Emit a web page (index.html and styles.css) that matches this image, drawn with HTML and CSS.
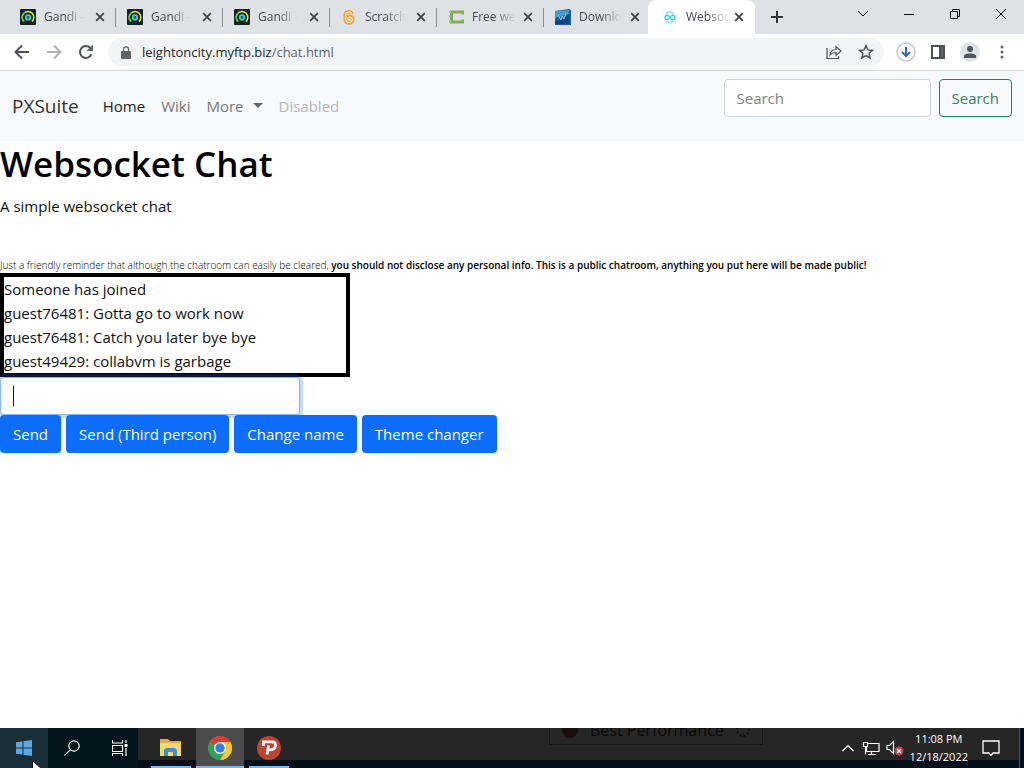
FILE: index.html
```html
<!DOCTYPE html>
<html lang="en">
<head>
  <meta charset="UTF-8" />
  <meta name="viewport" content="width=device-width, initial-scale=1.0"/>
  <title>Websocket Chat</title>
  <link rel="stylesheet" href="styles.css">
</head>
<body>
  <svg class="defs" aria-hidden="true">
    <symbol id="gandi" viewBox="0 0 16 16">
      <rect width="16" height="16" rx="1" fill="#142126"/>
      <path d="M4 12.600A5.800 5.800 0 1 1 12 12.600" fill="none" stroke="#f2e51c" stroke-width="1.500"/>
      <path d="M4 12.600A5.800 5.800 0 0 1 5 3.400" fill="none" stroke="#49c64e" stroke-width="1.500"/>
      <circle cx="8" cy="8.400" r="2.200" fill="#10575c" stroke="#35d5c8" stroke-width="1.800"/>
    </symbol>
    <symbol id="close" viewBox="0 0 10 10">
      <path d="M1.2 1.2 8.8 8.8M8.8 1.2 1.2 8.8" fill="none" stroke="#3c4043" stroke-width="1.7"/>
    </symbol>
  </svg>

  <header class="browser">
    <div class="tab-strip">
      <div class="tab"><svg class="favicon"><use href="#gandi"/></svg><span>Gandi -</span><button type="button" aria-label="Close tab"><svg><use href="#close"/></svg></button></div>
      <div class="tab"><svg class="favicon"><use href="#gandi"/></svg><span>Gandi -</span><button type="button" aria-label="Close tab"><svg><use href="#close"/></svg></button></div>
      <div class="tab"><svg class="favicon"><use href="#gandi"/></svg><span>Gandi -</span><button type="button" aria-label="Close tab"><svg><use href="#close"/></svg></button></div>
      <div class="tab">
        <svg class="favicon" viewBox="0 0 16 16">
          <path d="M10.500 5V3.300C8 2 4.500 3 4.300 6v4.500c.5 4.500 7.500 4.500 7.500.2 0-3.500-4-4.200-5-2" fill="none" stroke="#f0a03c" stroke-width="3.600" stroke-linejoin="round"/>
          <path d="M10.500 4.500V3.500C8 2.300 4.800 3.200 4.600 6v4.500c.5 4 6.800 4 6.800.2 0-2.800-3.200-3.500-4.200-1.500" fill="none" stroke="#fdebc6" stroke-width="1.300"/>
        </svg>
        <span>Scratch</span><button type="button" aria-label="Close tab"><svg><use href="#close"/></svg></button>
      </div>
      <div class="tab">
        <svg class="favicon" viewBox="0 0 16 16">
          <path d="M15 5.500V3H3.500v10H15v-2.500" fill="none" stroke="#83ad54" stroke-width="3"/>
          <path d="M1 2h2v2H1zM1 6h1v2H1zM1 11h2v3H1z" fill="#a8c58a"/>
        </svg>
        <span>Free we</span><button type="button" aria-label="Close tab"><svg><use href="#close"/></svg></button>
      </div>
      <div class="tab last">
        <svg class="favicon" viewBox="0 0 16 16">
          <path d="M0 2 14 0l2 1v15H0z" fill="#195c9e"/>
          <path d="M0 2 14 1v4L0 9z" fill="#4899cc"/>
          <path d="M0 12q8-1 14-7v10H0z" fill="#0d467f"/>
          <path d="M3 6l3 5 1-4 2 3 2-6" fill="none" stroke="#8fcdec" stroke-width="1"/>
        </svg>
        <span>Downlo</span><button type="button" aria-label="Close tab"><svg><use href="#close"/></svg></button>
      </div>
      <div class="tab active">
        <svg class="favicon" viewBox="0 0 16 16">
          <path d="M4 5Q8 1 12 5M4 12q4 3 8 0" fill="none" stroke="#a5dfe9" stroke-width="2"/>
          <path d="M8 8.500C6 5 3 6 3 8.500S6 12 8 8.500s5-2.500 5 0-3 3.500-5 0" fill="#e0fbff" stroke="#4bc4dc" stroke-width="1.500"/>
        </svg>
        <span>Websoc</span><button type="button" aria-label="Close tab"><svg><use href="#close"/></svg></button>
      </div>
      <button class="new-tab" type="button" aria-label="New tab"><svg viewBox="0 0 12 12"><path d="M6 0v12M0 6h12" stroke="#303236" stroke-width="2"/></svg></button>
      <div class="window-controls">
        <button type="button" aria-label="Search tabs"><svg viewBox="0 0 12 12"><path d="m1 3 5 5 5-5"/></svg></button>
        <button type="button" aria-label="Minimize"><svg viewBox="0 0 12 12"><path d="M1 6.500h10"/></svg></button>
        <button type="button" aria-label="Restore"><svg viewBox="0 0 12 12"><path d="M1.500 3.500h7v7h-7zM3.500 3.500v-2h7v7h-2"/></svg></button>
        <button type="button" aria-label="Close"><svg viewBox="0 0 12 12"><path d="m1 1 10 10M11 1 1 11"/></svg></button>
      </div>
    </div>

    <div class="toolbar">
      <button type="button" aria-label="Back"><svg viewBox="0 0 16 16"><path d="M15 8H2M8 1.500 1.500 8 8 14.500"/></svg></button>
      <button type="button" aria-label="Forward" disabled><svg viewBox="0 0 16 16"><path d="M1 8h13M8 1.500 14.500 8 8 14.500"/></svg></button>
      <button type="button" aria-label="Reload"><svg viewBox="0 0 16 16"><path d="M13.500 10.200A6 6 0 1 1 12.500 4L14 5.500"/><path d="M15 .500V7H8.500z" fill="#5f6368" stroke="none"/></svg></button>
      <div class="address-bar">
        <svg class="lock" viewBox="0 0 10 13"><path d="M1 5h8q1 0 1 1v6q0 1-1 1H1q-1 0-1-1V6q0-1 1-1z" fill="#5f6368"/><path d="M2.500 5V3.300a2.500 2.500 0 0 1 5 0V5" fill="none" stroke="#5f6368" stroke-width="1.300"/></svg>
        <span class="url">leightoncity.myftp.biz<span>/chat.html</span></span>
        <button type="button" aria-label="Share"><svg viewBox="0 0 16 16"><path d="M1 4v10.500h11.500V12M4 11c.500-4 3-5.500 6-5.500v-3L15 7l-5 4.500v-3Q6 8.500 4 11z" stroke-width="1.200"/></svg></button>
        <button type="button" aria-label="Bookmark"><svg viewBox="0 0 16 16"><path d="m8 1.800 1.900 4.100 4.600.500-3.400 3.100 1 4.500L8 11.700 3.900 14l1-4.500-3.400-3.100 4.600-.500z" stroke-width="1.500"/></svg></button>
      </div>
      <div class="toolbar-actions">
        <button type="button" aria-label="Downloads"><svg class="large" viewBox="0 0 20 20"><circle cx="10" cy="10" r="9" fill="#fff" stroke="#c7cbd1" stroke-width="1.500"/><path d="M10 5v9M6 10l4 4 4-4" stroke="#3266c4" stroke-width="2"/></svg></button>
        <button type="button" aria-label="Side panel"><svg viewBox="0 0 16 16"><path d="M2 2h12v12H2z"/><path d="M10 2h4v12h-4z" fill="#5f6368"/></svg></button>
        <button type="button" aria-label="Profile"><svg class="large" viewBox="0 0 20 20"><g stroke="none"><circle cx="10" cy="10" r="10" fill="#dfe2e7"/><circle cx="10" cy="7" r="3" fill="#50555c"/><path d="M4 16v-2C4 10.500 16 10.500 16 14v2z" fill="#50555c"/></g></svg></button>
        <button type="button" aria-label="Menu"><svg viewBox="0 0 16 16"><g fill="#5f6368" stroke="none"><circle cx="8" cy="3" r="1.500"/><circle cx="8" cy="8" r="1.500"/><circle cx="8" cy="13" r="1.500"/></g></svg></button>
      </div>
    </div>
  </header>

  <main class="page">
    <nav class="navbar">
      <a class="brand" href="#">PXSuite</a>
      <div class="nav-links">
        <a class="current" href="#">Home</a>
        <a href="#">Wiki</a>
        <a class="dropdown" href="#">More</a>
        <a class="disabled" href="#" aria-disabled="true">Disabled</a>
      </div>
      <form class="search">
        <input class="form-control" type="search" placeholder="Search" aria-label="Search">
        <button class="btn btn-outline" type="button">Search</button>
      </form>
    </nav>
    <h1>Websocket Chat</h1>
    <p class="lead">A simple websocket chat</p>
    <p class="reminder">Just a friendly reminder that although the chatroom can easily be cleared, <b>you should not disclose any personal info. This is a public chatroom, anything you put here will be made public!</b></p>
    <div class="chat">
      <div>Someone has joined</div>
      <div>guest76481: Gotta go to work now</div>
      <div>guest76481: Catch you later bye bye</div>
      <div>guest49429: collabvm is garbage</div>
    </div>
    <div class="message">
      <input class="form-control" id="message" type="text" aria-label="Message">
      <span class="caret"></span>
    </div>
    <div class="actions">
      <button class="btn btn-primary" type="button">Send</button>
      <button class="btn btn-primary" type="button">Send (Third person)</button>
      <button class="btn btn-primary" type="button">Change name</button>
      <button class="btn btn-primary" type="button">Theme changer</button>
    </div>
  </main>

  <footer class="taskbar">
    <div class="system">
      <button class="start" type="button" aria-label="Start"><svg viewBox="0 0 16 16"><path d="M0 2.300 6.500 1.400v6.100H0zM7.500 1.200 16 0v7.500H7.500zM0 8.500h6.500v6.100L0 13.700zM7.500 8.500H16V16l-8.500-1.200z" fill="#5aa9e4"/></svg></button>
      <button type="button" aria-label="Search"><svg viewBox="0 0 16 16"><circle cx="10" cy="6" r="5.200"/><path d="M6.200 9.800.500 15.500"/></svg></button>
      <button type="button" aria-label="Task view"><svg viewBox="0 0 16 16"><path d="M.500 0v3h10V0M.500 5.500h10v6H.500zM.500 16v-2.500h10V16M14 0v3M14 8v8"/><path d="M12.500 4h3v3h-3z" fill="#fff" stroke="none"/></svg></button>
    </div>
    <div class="apps">
      <button type="button" aria-label="File Explorer"><svg viewBox="0 0 24 24"><path d="M1 3h8l2 2h11v15H1z" fill="#e5a93b"/><path d="M1 7h21v13H1z" fill="#fbd86f"/><path d="M5 20v-5q0-3 3-3h7q3 0 3 3v5h-4v-4H9v4z" fill="#4192cb"/></svg></button>
      <button class="focused" type="button" aria-label="Chrome"><svg viewBox="0 0 24 24"><circle cx="12" cy="12" r="12" fill="#30a252"/><path d="M12 12 1.600 6A12 12 0 0 1 22.400 6z" fill="#df3d31"/><path d="M22.400 6A12 12 0 0 1 12 24l5.200-9L12 6z" fill="#fbc92e"/><circle cx="12" cy="12" r="6" fill="#fff"/><circle cx="12" cy="12" r="4.700" fill="#377de6"/></svg></button>
      <button type="button" aria-label="Psiphon"><svg viewBox="0 0 24 24"><circle cx="12" cy="12" r="12" fill="#bd4432"/><path d="M6.500 10V5.800H15q4 0 3.400 4-.6 4-4.600 4H11M10 18.500l1.600-9" fill="none" stroke="#fff" stroke-width="2.800"/></svg></button>
    </div>
    <div class="ghost">
      <span class="ghost-dot"></span>
      <span>Best Performance</span>
      <span class="ghost-ring"></span>
    </div>
    <div class="tray">
      <svg class="chevron" viewBox="0 0 12 12"><path d="m.500 9 5.500-5.500L11.500 9"/></svg>
      <svg viewBox="0 0 18 16"><path d="M5.500 3.500H17v8H4.500V7M9.500 11.500v3M6 14.500h8M1.500 2.500h4v4h-4zM3.500 6.500v8" stroke-width="1.200"/></svg>
      <svg viewBox="0 0 18 16"><path d="M1 5.500h2.500l4-4v12l-4-4H1z" stroke-width="1.200"/><circle cx="13" cy="11" r="4.500" fill="#c9404c" stroke="none"/><path d="m11 9 4 4m0-4-4 4"/></svg>
      <div class="clock"><span>11:08 PM</span><span>12/18/2022</span></div>
      <svg viewBox="0 0 18 16"><path d="M1 1h16v12h-6l-2 2.500L7 13H1z" stroke-width="1.300"/></svg>
    </div>
    <div class="show-desktop"></div>
    <svg class="cursor" viewBox="0 0 12 18"><path d="M.500.500v15l4-3.500 3 6 3-1-3-6H12z" fill="#fff" stroke="#111"/></svg>
  </footer>
</body>
</html>
```
FILE: styles.css
```css
* { margin: 0; padding: 0; box-sizing: border-box; }
body {
  font-family: "Open Sans", "Noto Sans", sans-serif;
  font-size: 15px;
  line-height: 24px;
  color: #111;
  background-color: #fff;
  display: flex;
  flex-direction: column;
  min-height: 100vh;
}
button, input { font: inherit; }
button { border: none; background: none; }
a { text-decoration: none; }
svg { display: block; flex: none; }
.defs { position: absolute; width: 0; height: 0; }

/* Browser */
.tab-strip {
  display: flex;
  height: 34px;
  padding-left: 10px;
  background-color: #dee1e6;
}
.tab {
  display: flex;
  align-items: center;
  width: 107px;
  padding: 0 12px 0 10px;
  position: relative;
  font-size: 12px;
  color: #45494d;
}
.tab:not(.last):not(.active)::after {
  content: "";
  position: absolute;
  right: 1px;
  top: 8px;
  width: 1px;
  height: 19px;
  background-color: #8b8e93;
}
.tab.active {
  margin-left: -4px;
  padding: 0 11px 0 14px;
  background-color: #fff;
  border-radius: 8px 8px 0 0;
}
.favicon { width: 16px; height: 16px; }
.tab span {
  margin-left: 8px;
  white-space: nowrap;
  -webkit-mask-image: linear-gradient(to right, #000 50%, transparent);
  mask-image: linear-gradient(to right, #000 50%, transparent);
}
.tab button { margin-left: auto; }
.tab button svg { width: 10px; height: 10px; }
.new-tab { width: 28px; margin-left: 8px; }
.new-tab svg { width: 12px; height: 12px; margin: auto; }
.window-controls { display: flex; margin-left: auto; height: 28px; }
.window-controls button { width: 46px; }
.window-controls svg { width: 12px; height: 12px; margin: auto; fill: none; stroke: #111; }
.toolbar {
  display: flex;
  align-items: center;
  height: 37px;
  padding: 0 6px;
  border-bottom: 1px solid #d6d8db;
}
.toolbar button { width: 32px; height: 28px; }
.toolbar button svg {
  width: 16px;
  height: 16px;
  margin: auto;
  fill: none;
  stroke: #4f5357;
  stroke-width: 2;
}
.toolbar button:disabled { opacity: 0.45; }
.toolbar button svg.large { width: 20px; height: 20px; }
.address-bar {
  flex: 1;
  display: flex;
  align-items: center;
  height: 28px;
  margin-left: 6px;
  padding: 0 2px 0 13px;
  border-radius: 14px;
  background-color: #f1f3f4;
}
.lock { width: 10px; height: 13px; }
.url { flex: 1; margin-left: 11px; font-size: 13px; color: #25282b; }
.url span { color: #5f6368; }
.toolbar-actions { display: flex; margin-left: 6px; }

/* Page */
.page { flex: 1; }
.navbar {
  display: flex;
  align-items: center;
  padding: 8px 12px;
  background-color: #f8f9fa;
}
.brand { margin-right: 16px; font-size: 19px; color: #333; }
.nav-links { display: flex; }
.nav-links a { padding: 8px; color: #777; }
.nav-links .current { color: #222; }
.nav-links .disabled { color: #b5b6b7; }
.dropdown::after {
  content: "";
  display: inline-block;
  margin-left: 9px;
  vertical-align: 4px;
  border-top: 5px solid #666;
  border-left: 5px solid transparent;
  border-right: 5px solid transparent;
}
.search { display: flex; gap: 8px; margin: 0 0 16px auto; }
.search input { width: 207px; }
.form-control {
  height: 38px;
  padding: 6px 12px;
  border: 1px solid #ced4da;
  border-radius: 4px;
  background-color: #fff;
  outline: none;
}
.form-control::placeholder { color: #7b838a; }
.btn { height: 38px; padding: 6px 12px; border: 1px solid transparent; border-radius: 4px; }
.btn-outline { color: #3a8260; border-color: #198754; }
.btn-primary { color: #fff; background-color: #0d6efd; }
h1 { margin-bottom: 7px; font-size: 35px; font-weight: 600; line-height: 46px; color: #000; }
.lead { margin-bottom: 40px; }
.reminder { font-size: 10px; font-weight: 300; line-height: 15px; white-space: nowrap; color: #000; }
.reminder b { font-weight: 600; }
.chat { max-width: 350px; border: 4px solid #000; }
.message { position: relative; max-width: 300px; }
.message input {
  display: block;
  width: 100%;
  border-color: #86b7fe;
  box-shadow: 0 0 0 3px rgba(13,110,253,0.25);
}
.caret {
  position: absolute;
  left: 13px;
  top: 9px;
  width: 1px;
  height: 20px;
  background-color: #111;
}
.actions { position: relative; display: flex; gap: 5px; }

/* Taskbar */
.taskbar {
  position: relative;
  display: flex;
  height: 40px;
  background: linear-gradient(#262626 32px, #020e1a 32px);
  overflow: hidden;
}
.system, .apps, .tray { display: flex; }
.system { width: 138px; background-color: #04161d; }
.system button { flex: none; width: 48px; }
.system svg { width: 16px; height: 16px; margin: auto; fill: none; stroke: #fff; stroke-width: 1.2; }
.system .start { background-color: #1b2f38; }
.system .start svg { stroke: none; }
.apps { gap: 1px; padding-left: 9px; }
.apps button {
  width: 48px;
  background: linear-gradient(#76b9ed, #76b9ed) center bottom / 40px 2px no-repeat;
}
.apps .focused { background-color: #4b4b4b; background-size: 48px 2px; }
.apps svg { width: 24px; height: 24px; margin: auto; }
/* Faded window edge behind the bar */
.ghost {
  position: absolute;
  left: 549px;
  top: -16px;
  display: flex;
  align-items: center;
  gap: 12px;
  width: 214px;
  height: 33px;
  padding: 2px 12px 0;
  border: 1px solid #171717;
  font-size: 16px;
  color: #090909;
}
.ghost-dot { width: 16px; height: 16px; border-radius: 50%; background-color: #181010; }
.ghost-ring { width: 14px; height: 14px; border: 2px dotted #111; border-radius: 50%; }
.tray { align-items: center; gap: 6px; margin-left: auto; padding-right: 19px; color: #fff; }
.tray svg { width: 18px; height: 16px; fill: none; stroke: #fff; stroke-width: 1.2; }
.tray .chevron { width: 12px; height: 12px; margin-right: 2px; }
.clock { display: flex; flex-direction: column; align-items: center; font-size: 11px; line-height: 18px; margin-right: 8px; }
.show-desktop { width: 5px; border-left: 1px solid #4a5560; background-color: #020e1a; }
.cursor { position: absolute; left: 32px; top: 32px; width: 12px; height: 18px; }
```
